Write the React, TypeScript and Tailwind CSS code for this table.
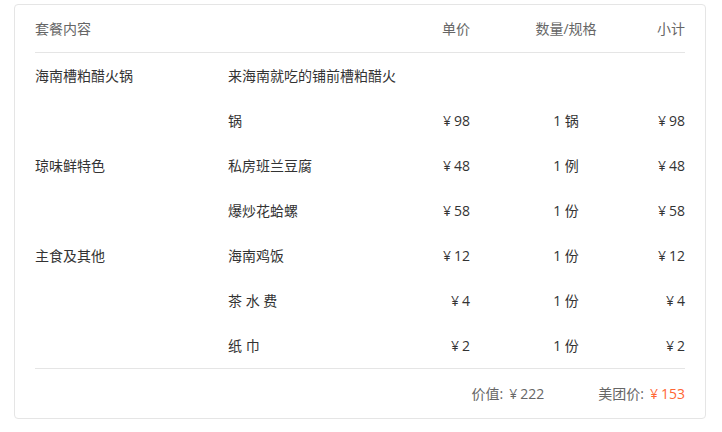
const rows = [
  { group: '海南槽粕醋火锅', name: '来海南就吃的铺前槽粕醋火锅', price: 98, qty: '1 锅' },
  { group: '琼味鲜特色', name: '私房班兰豆腐', price: 48, qty: '1 例' },
  { group: '', name: '爆炒花蛤螺', price: 58, qty: '1 份' },
  { group: '主食及其他', name: '海南鸡饭', price: 12, qty: '1 份' },
  { group: '', name: '茶 水 费', price: 4, qty: '1 份' },
  { group: '', name: '纸 巾', price: 2, qty: '1 份' },
];

const cols = 'grid grid-cols-[193px_172px_70px_156px_1fr]';

const Yuan = ({ v }: { v: number }) => (
  <span>
    <span className="mr-[3px]">¥</span>
    {v}
  </span>
);

export default function App() {
  return (
    <div className="w-[722px] h-[432px] bg-white pt-[4px] pl-[14px] font-['Open_Sans','Noto_Sans_CJK_SC',sans-serif] text-sm">
      <div className="w-[692px] h-[415px] border border-[#e5e5e5] rounded px-5">
        <div className={`${cols} h-[48px] items-center border-b border-[#e5e5e5] text-[#666]`}>
          <div>套餐内容</div>
          <div></div>
          <div className="text-right">单价</div>
          <div className="pl-[36px] text-center">数量/规格</div>
          <div className="text-right">小计</div>
        </div>
        <div className="border-b border-[#e5e5e5] text-[#333]">
          {rows.map((r, i) => (
            <div key={i} className={`${cols} leading-[45px]`}>
              <div className="self-start">{r.group}</div>
              <div>{r.name}</div>
              <div className="self-end text-right"><Yuan v={r.price} /></div>
              <div className="self-end pl-[36px] text-center">{r.qty}</div>
              <div className="self-end text-right"><Yuan v={r.price} /></div>
            </div>
          ))}
        </div>
        <div className="h-[49px] pt-px flex items-center justify-end gap-[54px] text-[#666]">
          <span>
            价值:<span className="ml-[6px]"><Yuan v={222} /></span>
          </span>
          <span>
            美团价:<span className="ml-[6px] text-[#ff6633]"><Yuan v={153} /></span>
          </span>
        </div>
      </div>
    </div>
  );
}
